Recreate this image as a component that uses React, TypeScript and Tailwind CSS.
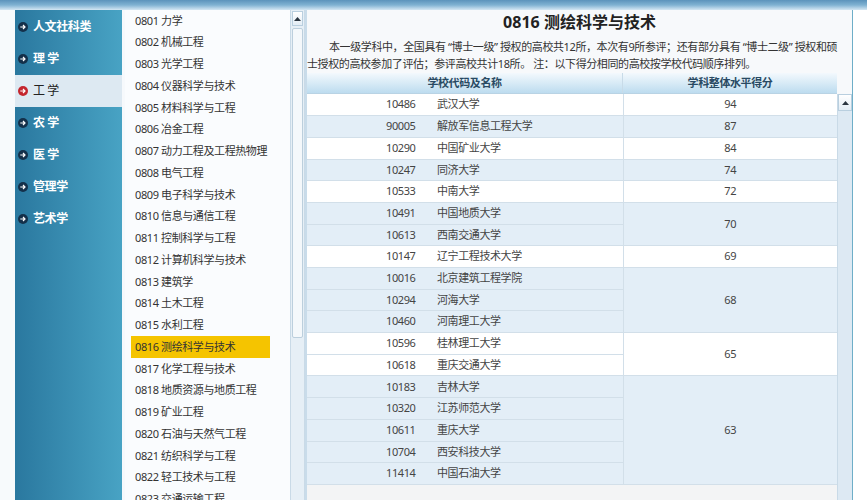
import React from "react";

const cats = [
  { label: "人文社科类" },
  { label: "理 学" },
  { label: "工 学", active: true },
  { label: "农 学" },
  { label: "医 学" },
  { label: "管理学" },
  { label: "艺术学" },
];

const subjects = [
  "0801 力学",
  "0802 机械工程",
  "0803 光学工程",
  "0804 仪器科学与技术",
  "0805 材料科学与工程",
  "0806 冶金工程",
  "0807 动力工程及工程热物理",
  "0808 电气工程",
  "0809 电子科学与技术",
  "0810 信息与通信工程",
  "0811 控制科学与工程",
  "0812 计算机科学与技术",
  "0813 建筑学",
  "0814 土木工程",
  "0815 水利工程",
  "0816 测绘科学与技术",
  "0817 化学工程与技术",
  "0818 地质资源与地质工程",
  "0819 矿业工程",
  "0820 石油与天然气工程",
  "0821 纺织科学与工程",
  "0822 轻工技术与工程",
  "0823 交通运输工程",
];

const groups: { score: number; rows: [string, string][] }[] = [
  { score: 94, rows: [["10486", "武汉大学"]] },
  { score: 87, rows: [["90005", "解放军信息工程大学"]] },
  { score: 84, rows: [["10290", "中国矿业大学"]] },
  { score: 74, rows: [["10247", "同济大学"]] },
  { score: 72, rows: [["10533", "中南大学"]] },
  { score: 70, rows: [["10491", "中国地质大学"], ["10613", "西南交通大学"]] },
  { score: 69, rows: [["10147", "辽宁工程技术大学"]] },
  {
    score: 68,
    rows: [["10016", "北京建筑工程学院"], ["10294", "河海大学"], ["10460", "河南理工大学"]],
  },
  { score: 65, rows: [["10596", "桂林理工大学"], ["10618", "重庆交通大学"]] },
  {
    score: 63,
    rows: [
      ["10183", "吉林大学"],
      ["10320", "江苏师范大学"],
      ["10611", "重庆大学"],
      ["10704", "西安科技大学"],
      ["11414", "中国石油大学"],
    ],
  },
];

function ArrowDot({ red }: { red?: boolean }) {
  return (
    <svg width="10" height="10" viewBox="0 0 10 10" className="shrink-0">
      <circle cx="5" cy="5" r="5" fill={red ? "#c4262e" : "#14304a"} />
      <path d="M2.3 5h4.6M5 3l2 2-2 2" stroke="#fff" strokeWidth="1.2" fill="none" />
    </svg>
  );
}

function UpBtn({ className }: { className?: string }) {
  return (
    <div
      className={
        "flex items-center justify-center border border-[#b9cfdf] bg-gradient-to-b from-[#ffffff] to-[#e3edf5] " +
        (className ?? "")
      }
    >
      <svg width="7" height="4" viewBox="0 0 7 4">
        <path d="M0 4L3.5 0 7 4z" fill="#2a3540" />
      </svg>
    </div>
  );
}

export default function App() {
  return (
    <div className="relative h-[500px] w-[867px] overflow-hidden bg-[#f6f9fc] font-['Noto_Sans','Noto_Sans_CJK_SC',sans-serif] text-[11px] tracking-[-0.4px] text-[#333]">
      {/* banner strip */}
      <div className="h-[10px] bg-gradient-to-b from-[#5b93bb] via-[#7fb2d2] to-[#d4e7f3]" />

      <div className="flex h-[490px]">
        <div className="w-[15px] bg-[#f7fafc]" />

        {/* category sidebar */}
        <div className="w-[107px] bg-gradient-to-r from-[#2a789f] to-[#48a3c4] pt-px">
          {cats.map((c) => (
            <div
              key={c.label}
              className={
                "flex h-[32px] items-center gap-[5px] pl-[3px] text-[12px] " +
                (c.active ? "bg-[#dde9f2] text-[#222]" : "font-bold text-white")
              }
            >
              <ArrowDot red={c.active} />
              <span className="whitespace-pre">{c.label}</span>
            </div>
          ))}
        </div>

        {/* subject list */}
        <div className="ml-[3px] w-[165px] bg-[#fafcfe]">
          {subjects.map((s) => (
            <div
              key={s}
              className={
                "flex h-[21.75px] items-center whitespace-nowrap " +
                (s.startsWith("0816") ? "ml-[6px] mr-[20px] bg-[#f5c400] pl-[4px]" : "pl-[10px]")
              }
            >
              {s}
            </div>
          ))}
        </div>

        {/* list scrollbar */}
        <div className="flex w-[15px] flex-col border-x border-[#c9dae7] bg-[#e6eff6] px-px pt-px">
          <UpBtn className="h-[15px]" />
          <div className="mt-[2px] h-[310px] rounded-[2px] border border-[#bccfdd] bg-[#f4f8fb]" />
        </div>

        {/* main panel */}
        <div className="flex w-[548px] flex-col border-l-2 border-r border-l-[#c9dcea] border-r-[#6eaec8] bg-[#f7f9fb]">
          <div className="h-[25px] text-center text-[16px] font-bold leading-[25px] tracking-normal text-[#222]">
            0816 测绘科学与技术
          </div>
          <div className="whitespace-nowrap pt-[3px] leading-[17px] text-[#333]">
            <div className="pl-[22px]">
              本一级学科中，全国具有 “博士一级” 授权的高校共12所，本次有9所参评；还有部分具有 “博士二级” 授权和硕
            </div>
            <div>士授权的高校参加了评估；参评高校共计18所。 注：以下得分相同的高校按学校代码顺序排列。</div>
          </div>

          <div className="mt-px flex">
            <div className="w-[531px]">
              <div className="flex h-[21px] border-b border-[#b9d3e4] bg-gradient-to-b from-[#f3f9fd] to-[#bddcef] font-bold text-[#294a63]">
                <div className="flex w-[316px] items-center justify-center border-r border-[#c8dbe8]">
                  学校代码及名称
                </div>
                <div className="flex flex-1 items-center justify-center">学科整体水平得分</div>
              </div>
              <table className="w-full table-fixed border-collapse text-[#444]">
                <colgroup>
                  <col className="w-[316px]" />
                  <col />
                </colgroup>
                <tbody>
                  {groups.flatMap((g, gi) =>
                    g.rows.map(([code, name], ri) => (
                      <tr
                        key={code}
                        className={"h-[21.7px] " + (gi % 2 === 0 ? "bg-white" : "bg-[#e3eef7]")}
                      >
                        <td className="border-b border-r border-[#d2dfe9] p-0">
                          <div className="flex items-center">
                            <span className="w-[79px]" />
                            <span className="w-[51px]">{code}</span>
                            <span>{name}</span>
                          </div>
                        </td>
                        {ri === 0 && (
                          <td
                            rowSpan={g.rows.length}
                            className="border-b border-[#d2dfe9] p-0 text-center"
                          >
                            {g.score}
                          </td>
                        )}
                      </tr>
                    ))
                  )}
                </tbody>
              </table>
              <div className="h-[30px] bg-[#f3f4f5]" />
            </div>
            <div className="mt-[21px] flex w-[15px] flex-col border-l border-[#c9dae7] bg-[#dde9f3]">
              <UpBtn className="h-[17px]" />
            </div>
          </div>
        </div>
        <div className="flex-1 bg-white" />
      </div>
    </div>
  );
}
